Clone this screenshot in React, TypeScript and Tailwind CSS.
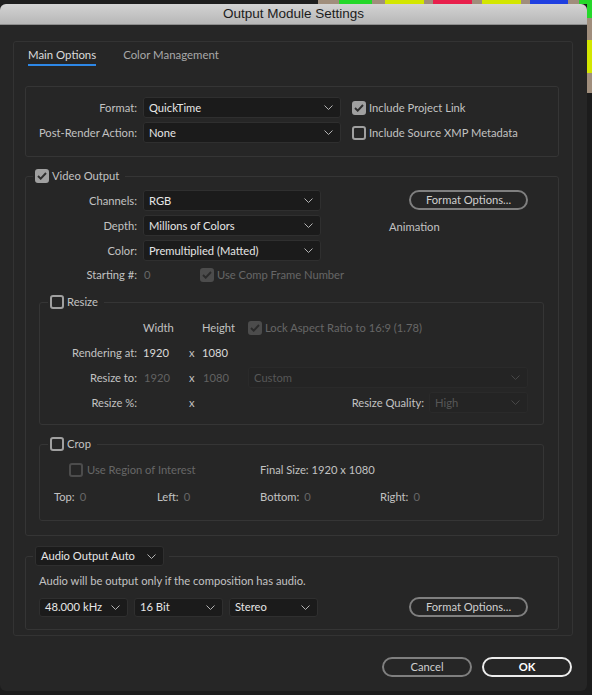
import React from "react";

function Chevron({ className }: { className?: string }) {
  return (
    <svg width="9" height="5" viewBox="0 0 9 5" className={className}>
      <polyline points="0.5,0.5 4.5,4.5 8.5,0.5" fill="none" stroke="currentColor" strokeWidth="1" />
    </svg>
  );
}

function Select({ value, className, disabled }: { value: string; className?: string; disabled?: boolean }) {
  return (
    <div
      className={`flex items-center justify-between rounded-[3px] border pl-[5px] pr-[7px] ${
        disabled ? "bg-[#242424] border-[#2a2a2a] text-[#575757]" : "bg-[#1b1b1b] border-[#2f2f2f] text-[#e6e6e6]"
      } ${className ?? ""}`}
    >
      <span className="whitespace-nowrap">{value}</span>
      <Chevron className={disabled ? "text-[#474747]" : "text-[#b3b3b3]"} />
    </div>
  );
}

function Check({ checked, disabled }: { checked?: boolean; disabled?: boolean }) {
  const border = disabled ? "border-[#4c4c4c]" : "border-[#a0a0a0]";
  const bg = checked ? (disabled ? "bg-[#4c4c4c]" : "bg-[#a0a0a0]") : "bg-transparent";
  return (
    <div className={`w-[14px] h-[14px] rounded-[3px] border-2 ${border} ${bg} flex items-center justify-center shrink-0`}>
      {checked && (
        <svg width="10" height="8" viewBox="0 0 10 8">
          <polyline points="1,4 3.7,6.7 9,1" fill="none" stroke={disabled ? "#2b2b2b" : "#2e2e2e"} strokeWidth="1.9" />
        </svg>
      )}
    </div>
  );
}

function PillButton({ label, className }: { label: string; className?: string }) {
  return (
    <div
      className={`flex items-center justify-center rounded-full border-2 border-[#7f7f7f] text-[#cfcfcf] ${className ?? ""}`}
    >
      {label}
    </div>
  );
}

export default function App() {
  return (
    <div className="w-[592px] h-[695px] bg-[#1c1c1c] flex flex-col overflow-hidden font-[Lato,sans-serif] text-[11.2px] leading-[16px] text-[#c2c2c2]">
      {/* colour strip */}
      <div className="h-[4px] flex shrink-0">
        <div className="w-[318px] bg-[#1e1e1e]" />
        <div className="w-[21px] bg-[#a08e7c]" />
        <div className="w-[33px] bg-[#25d82a]" />
        <div className="w-[13px] bg-[#a08e7c]" />
        <div className="w-[39px] bg-[#d3e600]" />
        <div className="w-[9px] bg-[#a08e7c]" />
        <div className="w-[39px] bg-[#e81f4c]" />
        <div className="w-[10px] bg-[#a08e7c]" />
        <div className="w-[39px] bg-[#d3e600]" />
        <div className="w-[9px] bg-[#a08e7c]" />
        <div className="w-[38px] bg-[#1f3fe0]" />
        <div className="w-[11px] bg-[#a08e7c]" />
        <div className="flex-1 bg-[#25d82a]" />
      </div>
      <div className="flex">
        {/* window */}
        <div className="w-[587px] h-[687px] rounded-[6px] bg-[#262626] flex flex-col overflow-hidden shrink-0">
          <div className="h-[21px] shrink-0 bg-gradient-to-b from-[#d3d3d3] to-[#b7b7b7] border-b border-[#8d8d8d] flex items-center justify-center font-['Liberation_Sans',sans-serif] text-[13.5px] text-[#1c1c1c]">
            Output Module Settings
          </div>
          <div className="pl-[13px] pt-[16px]">
            {/* main panel */}
            <div className="w-[560px] border border-[#333333] rounded-[3px] pb-[5px]">
              {/* tabs */}
              <div className="pl-[14px] pt-[5px] flex gap-[27px] text-[11.4px]">
                <div className="flex flex-col">
                  <span className="h-[16px] text-[#dcdcdc]">Main Options</span>
                  <div className="mt-[1px] h-[2px] bg-[#2d87e6]" />
                </div>
                <div className="flex flex-col">
                  <span className="h-[16px] text-[#a9a9a9]">Color Management</span>
                  <div className="mt-[1px] h-[2px]" />
                </div>
              </div>

              {/* format section */}
              <div className="ml-[11px] mt-[20px] w-[534px] border border-[#353535] rounded-[3px] pt-[10px] pb-[13px] flex">
                <div className="flex flex-col gap-[4px]">
                  <div className="flex items-center">
                    <span className="w-[111px] text-right">Format:</span>
                    <Select value="QuickTime" className="ml-[6px] w-[198px] h-[21px]" />
                  </div>
                  <div className="flex items-center">
                    <span className="w-[111px] text-right">Post-Render Action:</span>
                    <Select value="None" className="ml-[6px] w-[198px] h-[21px]" />
                  </div>
                </div>
                <div className="ml-[11px] flex flex-col gap-[4px]">
                  <div className="h-[21px] flex items-center gap-[3px]">
                    <Check checked />
                    <span>Include Project Link</span>
                  </div>
                  <div className="h-[21px] flex items-center gap-[3px]">
                    <Check />
                    <span>Include Source XMP Metadata</span>
                  </div>
                </div>
              </div>

              {/* video output */}
              <fieldset className="ml-[11px] mt-[11px] w-[534px] min-w-0 border border-[#353535] rounded-[3px] pt-[6px] pb-[14px]">
                <legend className="ml-[7px] px-[2px] pr-[6px]">
                  <div className="h-[16px] flex items-center gap-[3px]">
                    <Check checked />
                    <span>Video Output</span>
                  </div>
                </legend>
                <div className="flex">
                  <div className="flex flex-col gap-[4px]">
                    <div className="flex items-center">
                      <span className="w-[111px] text-right">Channels:</span>
                      <Select value="RGB" className="ml-[6px] w-[178px] h-[21px]" />
                    </div>
                    <div className="flex items-center">
                      <span className="w-[111px] text-right">Depth:</span>
                      <Select value="Millions of Colors" className="ml-[6px] w-[178px] h-[21px]" />
                    </div>
                    <div className="flex items-center">
                      <span className="w-[111px] text-right">Color:</span>
                      <Select value="Premultiplied (Matted)" className="ml-[6px] w-[178px] h-[21px]" />
                    </div>
                  </div>
                  <div className="ml-[68px] flex flex-col">
                    <PillButton label="Format Options..." className="ml-[20px] w-[119px] h-[20px]" />
                    <span className="mt-[9px]">Animation</span>
                  </div>
                </div>
                <div className="mt-[4px] h-[20px] flex items-center">
                  <span className="w-[111px] text-right">Starting #:</span>
                  <span className="ml-[7px] w-[56px] text-[#676767]">0</span>
                  <Check checked disabled />
                  <span className="ml-[3px] text-[#676767]">Use Comp Frame Number</span>
                </div>

                {/* resize */}
                <fieldset className="ml-[13px] mt-[9px] w-[505px] min-w-0 border border-[#353535] rounded-[3px] pt-[5px] pb-[9px]">
                  <legend className="ml-[8px] px-[2px] pr-[6px]">
                    <div className="h-[16px] flex items-center gap-[3px]">
                      <Check />
                      <span>Resize</span>
                    </div>
                  </legend>
                  <div className="h-[25px] flex items-center">
                    <span className="w-[103px]" />
                    <span className="w-[59px]">Width</span>
                    <span className="w-[46px]">Height</span>
                    <Check checked disabled />
                    <span className="ml-[3px] text-[#676767]">Lock Aspect Ratio to 16:9 (1.78)</span>
                  </div>
                  <div className="h-[25px] flex items-center">
                    <span className="w-[97px] text-right">Rendering at:</span>
                    <span className="ml-[6px] w-[46px] text-[#dadada]">1920</span>
                    <span className="w-[13px]">x</span>
                    <span className="w-[46px] text-[#dadada]">1080</span>
                  </div>
                  <div className="h-[25px] flex items-center">
                    <span className="w-[97px] text-right">Resize to:</span>
                    <span className="ml-[6px] w-[46px] pl-[1px] text-[#626262]">1920</span>
                    <span className="w-[13px]">x</span>
                    <span className="w-[46px] pl-[1px] text-[#626262]">1080</span>
                    <Select disabled value="Custom" className="w-[280px] h-[21px]" />
                  </div>
                  <div className="h-[25px] flex items-center">
                    <span className="w-[97px] text-right">Resize %:</span>
                    <span className="ml-[6px] w-[46px]" />
                    <span className="w-[13px]">x</span>
                    <span className="w-[222px] text-right">Resize Quality:</span>
                    <Select disabled value="High" className="ml-[5px] w-[99px] h-[21px]" />
                  </div>
                </fieldset>

                {/* crop */}
                <fieldset className="ml-[13px] mt-[11px] w-[505px] min-w-0 border border-[#353535] rounded-[3px] pt-[4px] pb-[10px]">
                  <legend className="ml-[8px] px-[2px] pr-[6px]">
                    <div className="h-[16px] flex items-center gap-[3px]">
                      <Check />
                      <span>Crop</span>
                    </div>
                  </legend>
                  <div className="h-[27px] flex items-center">
                    <div className="w-[220px] pl-[29px] flex items-center gap-[4px]">
                      <Check disabled />
                      <span className="text-[#676767]">Use Region of Interest</span>
                    </div>
                    <span>Final Size: 1920 x 1080</span>
                  </div>
                  <div className="h-[27px] pl-[14px] flex items-center">
                    <div className="w-[103px] flex gap-[5px]">
                      <span>Top:</span>
                      <span className="text-[#676767]">0</span>
                    </div>
                    <div className="w-[103px] flex gap-[5px]">
                      <span>Left:</span>
                      <span className="text-[#676767]">0</span>
                    </div>
                    <div className="w-[120px] flex gap-[5px]">
                      <span>Bottom:</span>
                      <span className="text-[#676767]">0</span>
                    </div>
                    <div className="flex gap-[5px]">
                      <span>Right:</span>
                      <span className="text-[#676767]">0</span>
                    </div>
                  </div>
                </fieldset>
              </fieldset>

              {/* audio */}
              <fieldset className="ml-[11px] mt-[10px] w-[534px] min-w-0 border border-[#353535] rounded-[3px] pt-[7px] pb-[12px] pl-[13px]">
                <legend className="-ml-[6px] px-[2px] pr-[5px]">
                  <Select value="Audio Output Auto" className="w-[129px] h-[20px]" />
                </legend>
                <div className="h-[16px]">Audio will be output only if the composition has audio.</div>
                <div className="mt-[8px] flex items-center">
                  <Select value="48.000 kHz" className="w-[89px] h-[19px]" />
                  <Select value="16 Bit" className="ml-[6px] w-[89px] h-[19px]" />
                  <Select value="Stereo" className="ml-[6px] w-[89px] h-[19px]" />
                  <PillButton label="Format Options..." className="ml-[91px] w-[119px] h-[20px]" />
                </div>
              </fieldset>
            </div>
          </div>
          {/* buttons */}
          <div className="mt-[21px] pr-[15px] flex justify-end gap-[10px]">
            <PillButton label="Cancel" className="w-[90px] h-[20px]" />
            <div className="w-[90px] h-[20px] rounded-full border-2 border-[#ececec] text-white font-bold flex items-center justify-center">
              OK
            </div>
          </div>
        </div>
        {/* right background strip */}
        <div className="w-[5px] flex flex-col">
          <div className="h-[14px] bg-[#25d82a]" />
          <div className="h-[22px] bg-[#a08e7c]" />
          <div className="h-[33px] bg-[#d3e600]" />
          <div className="h-[20px] bg-[#a08e7c]" />
          <div className="flex-1 bg-[#1c1c1c]" />
        </div>
      </div>
    </div>
  );
}
